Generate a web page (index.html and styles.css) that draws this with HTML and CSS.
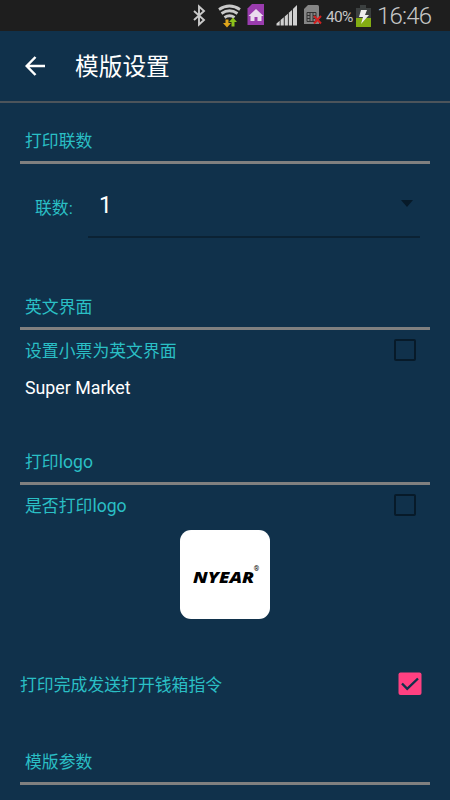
FILE: index.html
```html
<!DOCTYPE html>
<html lang="zh-CN">
<head>
<meta charset="utf-8">
<title>模版设置</title>
<link rel="stylesheet" href="styles.css">
</head>
<body>
<div class="status">
  <svg class="status-icons" width="134" height="31" viewBox="190 0 134 31">
    <path d="M194 11l10 9-5 4.500V6.500l5 4.500-10 9" fill="none" stroke="#c9c9c9" stroke-width="1.900"/>
    <g fill="none" stroke="#c9c9c9" stroke-width="2.800">
      <path d="M219 9.500q10.500-7 21 0M221.500 13.500q8-5.500 16 0M224.500 17.500q5-3.500 10 0"/>
    </g>
    <path d="M225.500 19.500h3v3.500h2.500l-4 4.500-4-4.500h2.500z" fill="#e0a51b"/>
    <path d="M231.500 26.500h3V22h2.500l-4-4.500-4 4.500h2.500z" fill="#8cc21b"/>
    <path d="M252 4h12v21h-16.500V8.500z" fill="#9a3cae"/>
    <path d="M256 9l7.500 7h-2v5h-4v-4h-3v4h-4v-5h-2z" fill="#eadcee"/>
    <path d="M276.500 25.500V23.500l3.200-2.700v4.700zM280.600 25.500V20l3.200-2.700v8.200zM284.700 25.500v-9l3.200-2.800v11.800zM288.800 25.500V12.800L292 10v15.500zM292.900 25.500V9l4.100-4v20.500z" fill="#d0d0d0"/>
    <path d="M308 5h9.500q1.500 0 1.500 1.500V24h-15V9z" fill="#858585"/>
    <path d="M307 12.500h9v9h-9zM310 12.500v9M313 12.500v9M307 15.500h3M307 18.500h3M313 15.500h3M313 18.500h3" fill="none" stroke="#333"/>
    <path d="M314 16l7 7.500M321 16l-7 7.500" stroke="#d42020" stroke-width="2"/>
  </svg>
  <span class="percent">40%</span>
  <svg class="battery" width="16" height="24" viewBox="355 4 16 24">
    <path d="M360 5h6v3h5v19h-15V8h4z" fill="#3c4040"/>
    <path d="M356 18h15v9h-15z" fill="#83ad13"/>
    <path d="M361 10h6l-2 5h4l-8 9 2-7h-4z" fill="#eee"/>
  </svg>
  <span class="clock">16:46</span>
</div>
<header class="bar">
  <svg class="back" width="20" height="20" viewBox="0 0 20 20"><path d="M20 10H2M10.500 1L1.700 10l8.800 9" fill="none" stroke="#fff" stroke-width="2.500"/></svg>
  <h1>模版设置</h1>
</header>
<main>
  <section class="copies">
    <h2>打印联数</h2>
    <div class="field">
      <label>联数:</label>
      <div class="select"><span>1</span><i class="arrow"></i></div>
    </div>
  </section>
  <section class="english">
    <h2>英文界面</h2>
    <div class="option"><span>设置小票为英文界面</span><i class="box"></i></div>
    <p class="shop">Super Market</p>
  </section>
  <section class="logo-section">
    <h2>打印<span class="latin">logo</span></h2>
    <div class="option"><span>是否打印<span class="latin">logo</span></span><i class="box"></i></div>
    <div class="logo"><span class="brand">NYEAR</span><span class="reg">®</span></div>
  </section>
  <div class="option drawer">
    <span>打印完成发送打开钱箱指令</span>
    <svg width="24" height="24" viewBox="0 0 24 24"><rect x=".5" y=".5" width="23" height="22.500" rx="2" fill="#ff4081"/><path d="M4 11.500l5.200 5.300L20 6.500" fill="none" stroke="#10314b" stroke-width="2.400"/></svg>
  </div>
  <section>
    <h2>模版参数</h2>
  </section>
</main>
</body>
</html>
```
FILE: styles.css
```css
* { box-sizing: border-box; }
body {
  margin: 0;
  height: 800px;
  overflow: hidden;
  background: #10314b;
  color: #2abfc5;
  font: 16.85px/24px Roboto, "Noto Sans CJK SC", sans-serif;
}
.status {
  display: flex;
  align-items: center;
  height: 31px;
  padding-left: 190px;
  background: #1e1e1e;
  color: #c6c6c6;
  white-space: nowrap;
}
.status svg { flex: none; }
.percent { width: 31px; margin-left: 2px; font-size: 15.5px; letter-spacing: -.7px; padding-top: 2px; }
.battery { margin-left: -2px; }
.clock { margin-left: 6px; font-size: 24px; font-weight: 300; letter-spacing: -.8px; }
.bar {
  display: flex;
  align-items: center;
  height: 72px;
  padding-left: 25px;
  border-bottom: 2px solid #4c545b;
  color: #fff;
}
h1 { margin: 2px 0 0 30px; font-size: 23.7px; font-weight: 400; line-height: 32px; }
main { padding: 16px 20px 0; }
h2 {
  height: 45px;
  margin: 0;
  padding-left: 5px;
  border-bottom: 3px solid #808080;
  font-size: 16.85px;
  font-weight: 400;
  line-height: 44px;
}
.copies { height: 166px; }
.field { display: flex; padding: 13px 10px 0 15px; }
.field label { width: 53px; line-height: 63px; }
.select {
  display: flex;
  flex: 1;
  justify-content: space-between;
  align-items: center;
  height: 61px;
  padding: 0 6px 1px 11px;
  border-bottom: 2px solid #0b2234;
  color: #fff;
  font-size: 23px;
}
.arrow { margin: 0 1px 5px 0; border: 6px solid transparent; border-top: 7px solid #071a29; border-bottom: 0; }
.english { height: 155px; }
.option { display: flex; align-items: center; justify-content: space-between; height: 40px; padding: 0 14px 0 5px; }
.option > span { padding-top: 2px; }
.latin { font-size: 17.6px; line-height: 1; }
.box { width: 22px; height: 22px; border: 2px solid #071a29; border-radius: 2px; }
.shop { margin: 6px 5px; color: #fff; font-size: 17.8px; }
.logo-section { height: 224px; }
.logo {
  display: flex;
  align-items: center;
  justify-content: center;
  width: 90px;
  height: 89px;
  margin: 5px auto 0;
  padding-top: 4px;
  border-radius: 11px;
  background: #fff;
  color: #000;
}
.brand { margin: 0 8px; font: italic 800 15px/20px "Open Sans", sans-serif; transform: scaleX(1.24); }
.reg { font-size: 7px; line-height: 7px; margin: 0 0 14px -2px; }
.drawer { padding: 0 8px 0 0; margin-bottom: 36px; }
```
